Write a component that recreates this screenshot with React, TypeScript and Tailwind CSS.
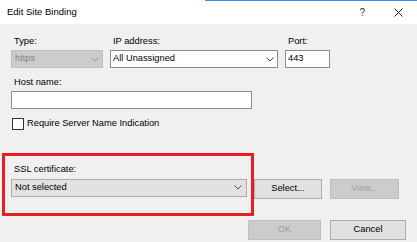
import type { ReactNode } from "react";

function Chevron({ color = "#505050" }: { color?: string }) {
  return (
    <svg width="8" height="5" viewBox="0 0 8 5" className="ml-auto shrink-0">
      <polyline points="0.5,0.5 4,4 7.5,0.5" fill="none" stroke={color} strokeWidth="1" />
    </svg>
  );
}

function Feld({ label, labelH = "h-[16px]", children }: { label: string; labelH?: string; children: ReactNode }) {
  return (
    <div className="flex flex-col">
      <div className={`${labelH} leading-[14px] pl-[3px]`}>{label}</div>
      {children}
    </div>
  );
}

function Knapp({ children, w, disabled }: { children: ReactNode; w: string; disabled?: boolean }) {
  return (
    <div
      className={`${w} h-[20px] flex items-center justify-center border ${
        disabled ? "bg-[#cccccc] border-[#bfbfbf] text-[#a0a0a0]" : "bg-[#e1e1e1] border-[#adadad] text-black"
      }`}
    >
      {children}
    </div>
  );
}

export default function App() {
  return (
    <div className="relative w-[417px] h-[242px] overflow-hidden bg-[#f0f0f0] text-[9.3px] text-black font-['Liberation_Sans',Arial,sans-serif]">
      {/* tittellinje */}
      <div className="h-[24px] bg-white flex flex-col">
        <div className="h-px ml-[205px] bg-[#3b8de0]" />
        <div className="flex-1 flex items-center pl-[7px] pr-[14px]">
          <span className="text-[9.5px]">Edit Site Binding</span>
          <span className="ml-auto text-[10px] text-[#333]">?</span>
          <svg width="9" height="9" viewBox="0 0 9 9" className="ml-[29px]">
            <path d="M0.5 0.5 L8.5 8.5 M8.5 0.5 L0.5 8.5" stroke="#222" strokeWidth="1" />
          </svg>
        </div>
      </div>

      <div className="pl-[11px] pt-[10px]">
        <div className="flex gap-[7px]">
          <div className="w-[92px]">
            <Feld label="Type:">
              <div className="h-[18px] flex items-center pl-[3px] pr-[3px] bg-[#cccccc] border border-[#bfbfbf] text-[#838383]">
                https
                <Chevron color="#9a9a9a" />
              </div>
            </Feld>
          </div>
          <div className="w-[168px]">
            <Feld label="IP address:">
              <div className="h-[18px] flex items-center pl-[2px] pr-[3px] bg-white border border-[#8c8c8c]">
                All Unassigned
                <Chevron />
              </div>
            </Feld>
          </div>
          <div className="w-[45px]">
            <Feld label="Port:">
              <div className="h-[18px] flex items-center pl-[2px] bg-white border border-[#8c8c8c]">443</div>
            </Feld>
          </div>
        </div>

        <div className="mt-[7px] w-[241px]">
          <Feld label="Host name:">
            <div className="h-[18px] bg-white border border-[#8c8c8c]" />
          </Feld>
        </div>

        <div className="mt-[8px] flex items-center gap-[3px] ml-[1px]">
          <div className="w-[12px] h-[12px] bg-white border border-[#333]" />
          <span>Require Server Name Indication</span>
        </div>

        <div className="mt-[31px]">
          <div className="h-[17px] leading-[14px] pl-[3px]">SSL certificate:</div>
          <div className="flex items-start">
            <div className="w-[236px] h-[18px] flex items-center pl-[3px] pr-[4px] bg-[#e1e1e1] border border-[#adadad]">
              Not selected
              <Chevron />
            </div>
            <div className="ml-[7px]">
              <Knapp w="w-[68px]">Select...</Knapp>
            </div>
            <div className="ml-[8px]">
              <Knapp w="w-[69px]" disabled>
                View...
              </Knapp>
            </div>
          </div>
        </div>

        <div className="mt-[21px] flex justify-end gap-[9px] pr-[11px]">
          <Knapp w="w-[73px]" disabled>
            OK
          </Knapp>
          <Knapp w="w-[76px]">Cancel</Knapp>
        </div>
      </div>

      {/* rød markering lagt over */}
      <div className="absolute left-[2px] top-[153px] w-[252px] h-[63px] border-[3px] border-[#ed1c24] pointer-events-none" />
    </div>
  );
}
